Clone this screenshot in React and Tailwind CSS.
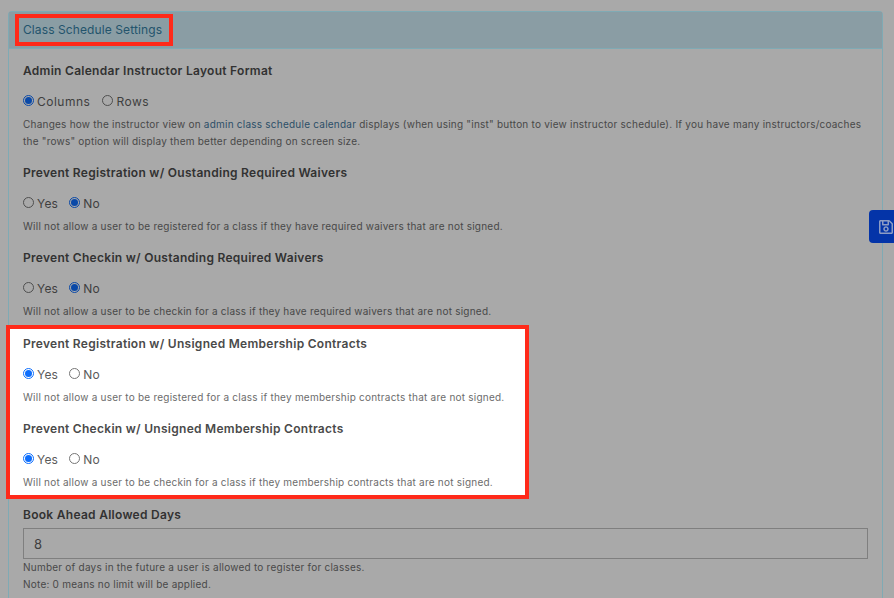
import { FaRegSave } from 'react-icons/fa'

function Radio({ label, checked, bright, roomy }) {
  const ring = bright ? 'border-[#767676]' : 'border-[#4f4f4f]'
  const on = bright ? 'border-[#0d6efd]' : 'border-[#0a49a8]'
  const dot = bright ? 'bg-[#0d6efd]' : 'bg-[#0a49a8]'
  return (
    <label className="flex items-center">
      <span className={`flex items-center justify-center w-[11px] h-[11px] rounded-full border -mt-[3px] ${checked ? on : ring}`}>
        {checked && <span className={`w-[7px] h-[7px] rounded-full ${dot}`} />}
      </span>
      <span className={`ml-[3px] text-[12px] ${roomy ? 'tracking-[0.5px]' : 'tracking-[0.2px]'} ${bright ? 'text-[#5a5a5a]' : 'text-[#3f3f3f]'}`}>{label}</span>
    </label>
  )
}

function Field({ title, options, bright, roomy, children, last }) {
  return (
    <div className={last ? '' : 'mb-[13px]'}>
      <h3 className={`h-[20px] leading-[20px] text-[12px] font-semibold tracking-[0.28px] ${bright ? 'text-[#4a4a4a]' : 'text-[#323232]'}`}>{title}</h3>
      <div className={`flex h-[20px] mt-[11px] ${roomy ? 'gap-[12px]' : 'gap-[11px]'}`}>
        {options.map((o) => (
          <Radio key={o.label} label={o.label} checked={o.checked} bright={bright} roomy={roomy} />
        ))}
      </div>
      <div className={`mt-[4px] text-[10px] leading-[17px] tracking-[0.23px] ${bright ? 'text-[#6c6c6c]' : 'text-[#484848]'}`}>{children}</div>
    </div>
  )
}

const yesNo = (yes) => [
  { label: 'Yes', checked: yes },
  { label: 'No', checked: !yes },
]

export default function App() {
  return (
    <div className="relative h-[598px] w-[894px] overflow-hidden bg-[#a9a9a9] pt-[11px] pl-[8px] pr-[11px] font-['Inter',sans-serif]">
      <div className="rounded-t-[4px] border border-b-0 border-[#7faab4] h-[640px]">
        <div className="flex items-center h-[37px] bg-[#8a9da4] border-b border-[#7faab4] pl-[6px]">
          <div className="border-4 border-[#ff2a1a] h-[32px] pl-[4px] pr-[7px] flex items-center text-[12px] tracking-[0.1px] text-[#23546c]">
            Class Schedule Settings
          </div>
        </div>

        <div className="pt-[12px] px-[14px]">
          <Field roomy title="Admin Calendar Instructor Layout Format" options={[{ label: 'Columns', checked: true }, { label: 'Rows', checked: false }]}>
            Changes how the instructor view on <span className="text-[#2c4f68]">admin class schedule calendar</span> displays (when using "inst" button to view instructor schedule). If you have many instructors/coaches the "rows" option will display them better depending on screen size.
          </Field>
          <Field title="Prevent Registration w/ Oustanding Required Waivers" options={yesNo(false)}>
            Will not allow a user to be registered for a class if they have required waivers that are not signed.
          </Field>
          <Field title="Prevent Checkin w/ Oustanding Required Waivers" options={yesNo(false)}>
            Will not allow a user to be checkin for a class if they have required waivers that are not signed.
          </Field>

          <div className="w-[523px] -ml-[17px] -mt-[8px] mb-[6px] border-4 border-[#ff2a1a] bg-white pt-[5px] pb-[4px] pl-[13px]">
            <Field bright title="Prevent Registration w/ Unsigned Membership Contracts" options={yesNo(true)}>
              Will not allow a user to be registered for a class if they membership contracts that are not signed.
            </Field>
            <Field bright last title="Prevent Checkin w/ Unsigned Membership Contracts" options={yesNo(true)}>
              Will not allow a user to be checkin for a class if they membership contracts that are not signed.
            </Field>
          </div>

          <h3 className="h-[20px] leading-[20px] text-[12px] font-semibold tracking-[0.28px] text-[#323232]">Book Ahead Allowed Days</h3>
          <input
            readOnly
            value="8"
            className="block w-full h-[31px] mt-[3px] border border-[#7f7f7f] bg-transparent px-[10px] text-[13px] text-[#3f3f3f] outline-none"
          />
          <div className="text-[10px] leading-[17px] tracking-[0.23px] text-[#484848]">
            <p>Number of days in the future a user is allowed to register for classes.</p>
            <p>Note: 0 means no limit will be applied.</p>
          </div>
        </div>
      </div>

      <button className="absolute left-[869px] top-[210px] w-[30px] h-[33px] rounded-l-[4px] bg-[#0434a8] flex items-center pl-[9px] text-[#8d9cc4]">
        <FaRegSave className="w-[16px] h-[16px]" />
      </button>
    </div>
  )
}
